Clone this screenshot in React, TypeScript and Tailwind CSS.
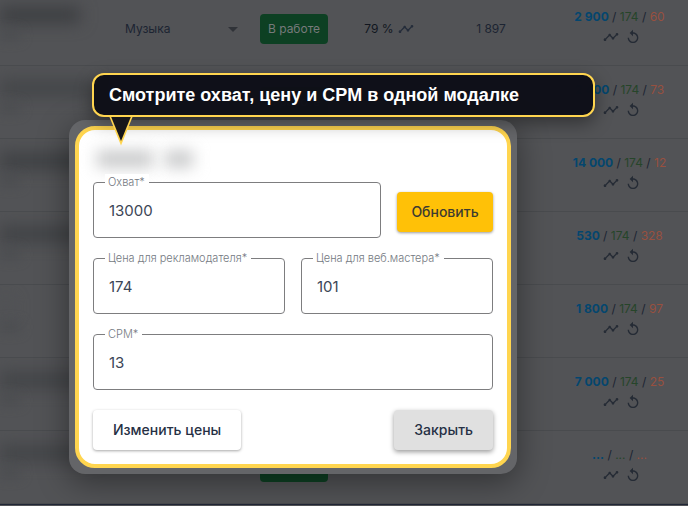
import { MdArrowDropDown, MdReplay, MdTimeline } from "react-icons/md";

type Row = {
  category: string;
  percent: string;
  count: string;
  price: [string, string, string];
  nameShade: string;
};

const rows: Row[] = [
  { category: "Музыка", percent: "79 %", count: "1 897", price: ["2 900", "174", "60"], nameShade: "w-20 bg-[#3c3e41]" },
  { category: "Музыка", percent: "79 %", count: "1 346", price: ["2 400", "174", "73"], nameShade: "w-24 bg-[#434548]" },
  { category: "Музыка", percent: "79 %", count: "1 897", price: ["14 000", "174", "12"], nameShade: "w-24 bg-[#3e4043]" },
  { category: "Музыка", percent: "79 %", count: "1 897", price: ["530", "174", "328"], nameShade: "w-24 bg-[#404245]" },
  { category: "Музыка", percent: "79 %", count: "1 897", price: ["1 800", "174", "97"], nameShade: "w-3 bg-[#505154]" },
  { category: "Музыка", percent: "79 %", count: "1 897", price: ["7 000", "174", "25"], nameShade: "w-24 bg-[#424447]" },
  { category: "Музыка", percent: "79 %", count: "1 897", price: ["...", "...", "..."], nameShade: "w-24 bg-[#424447]" },
];

function Field({ id, label, value }: { id: string; label: string; value: string }) {
  return (
    <div className="relative min-w-0 flex-1">
      <label
        htmlFor={id}
        className="absolute -top-2 left-3 bg-white pr-1 pl-[3px] text-[11px] leading-4 font-light whitespace-nowrap text-[#747981]"
      >
        {label}
      </label>
      <input
        id={id}
        defaultValue={value}
        className="h-14 w-full rounded border border-[#7d7d7f] bg-white px-[15px] text-[15px] text-[#3c4656] outline-none"
      />
    </div>
  );
}

function ChannelTable() {
  return (
    <table className="-mt-[7px] w-full table-fixed border-separate border-spacing-0">
      <colgroup>
        <col className="w-[109px]" />
        <col className="w-[140px]" />
        <col className="w-[90px]" />
        <col className="w-[100px]" />
        <col className="w-[104px]" />
        <col />
      </colgroup>
      <tbody className="[&_td]:border-b [&_td]:border-[#494b4e]">
        {rows.map((row, i) => (
          <tr key={i} className="h-[73px]">
            <td className="overflow-hidden p-0 align-top">
              <div className={`mt-3.5 h-4 blur-[8px] ${row.nameShade}`} />
              <div className="mt-2 h-2 w-5 bg-[#4a4c4f] blur-[6px]" />
            </td>
            <td className="p-0 pl-4">
              <button className="flex w-[120px] items-center justify-between text-xs">
                {row.category}
                <MdArrowDropDown className="size-6 text-[#303338]" />
              </button>
            </td>
            <td className="p-0">
              <button className="mx-auto block h-[30px] w-[68px] rounded bg-[#0d4023] text-xs text-[#777a7b]">
                В работе
              </button>
            </td>
            <td className="p-0">
              <div className="flex items-center justify-center gap-1 text-xs text-[#11161f]">
                {row.percent}
                <MdTimeline className="size-4 text-[#242c3a]" />
              </div>
            </td>
            <td className="p-0 text-center text-xs">{row.count}</td>
            <td className="p-0 pb-1 pl-2 text-center text-xs leading-5">
              <div>
                <span className="font-bold text-[#04466e]">{row.price[0]}</span>
                {" / "}
                <span className="text-[#26452a]">{row.price[1]}</span>
                {" / "}
                <span className="text-[#98503f]">{row.price[2]}</span>
              </div>
              <div className="flex h-5 items-center justify-center gap-1.5 pl-1 text-[#252b35]">
                <button aria-label="История">
                  <MdTimeline className="size-4" />
                </button>
                <button aria-label="Обновить">
                  <MdReplay className="size-4" />
                </button>
              </div>
            </td>
          </tr>
        ))}
      </tbody>
    </table>
  );
}

function PriceModal() {
  return (
    <div
      role="dialog"
      aria-label="Охват и цены"
      className="absolute top-[120px] left-[69px] w-[448px] max-w-full rounded-2xl bg-[#646568] p-1.5 shadow-[0_8px_32px_rgba(0,0,0,0.4)]"
    >
      <form className="rounded-[20px] border-4 border-[#ffd54f] bg-white p-3.5 text-sm">
        <div className="flex h-[38px] items-center gap-3 px-1 pb-2">
          <div className="h-4 w-14 bg-[#c4c5c6] blur-[8px]" />
          <div className="h-4 w-7 bg-[#c4c5c6] blur-[8px]" />
        </div>
        <div className="flex flex-col gap-5">
          <div className="flex items-center gap-4">
            <Field id="reach" label="Охват*" value="13000" />
            <button
              type="button"
              className="mt-1 h-10 w-24 rounded bg-[#ffc107] font-medium text-[#3d3b30] shadow-[0_1px_3px_rgba(0,0,0,0.4)]"
            >
              Обновить
            </button>
          </div>
          <div className="flex gap-4">
            <Field id="advertiser" label="Цена для рекламодателя*" value="174" />
            <Field id="webmaster" label="Цена для веб.мастера*" value="101" />
          </div>
          <Field id="cpm" label="CPM*" value="13" />
          <div className="flex justify-between">
            <button
              type="button"
              className="h-10 rounded bg-white px-5 font-medium text-[#263044] shadow-[0_1px_3px_rgba(0,0,0,0.35)]"
            >
              Изменить цены
            </button>
            <button
              type="button"
              className="h-10 rounded bg-[#e0e0e0] px-5 font-medium text-[#263044] shadow-[0_2px_5px_rgba(0,0,0,0.4)]"
            >
              Закрыть
            </button>
          </div>
        </div>
      </form>
    </div>
  );
}

function Callout() {
  return (
    <div className="absolute top-[73px] left-[92px] w-[503px] max-w-full">
      <p className="rounded-xl border-2 border-[#ffd54f] bg-[#0e0f17]/98 px-[15px] py-2 font-['Liberation_Sans',sans-serif] text-lg leading-6 font-bold text-white shadow-[0_6px_18px_rgba(0,0,0,0.4)]">
        Смотрите охват, цену и CPM в одной модалке
      </p>
      <svg viewBox="0 0 24 29" className="absolute top-full left-[17px] h-[29px] w-6" aria-hidden>
        <path d="M0.5 0H23.5L12 28.5Z" fill="#ffd54f" />
        <path d="M2.2 0H21.8L12 24Z" fill="#17171a" />
      </svg>
    </div>
  );
}

export default function App() {
  return (
    <div className="relative min-h-screen overflow-hidden bg-[#525356] font-[Inter,sans-serif] text-[#1c2432]">
      <ChannelTable />
      <PriceModal />
      <Callout />
      <div className="border-t border-[#202636]" />
    </div>
  );
}
